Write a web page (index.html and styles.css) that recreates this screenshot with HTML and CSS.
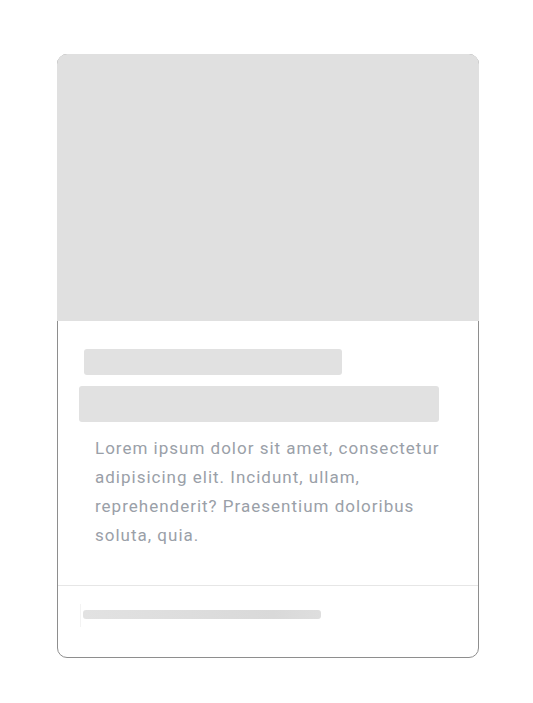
FILE: index.html
```html
<!DOCTYPE html>
<html>
<head>
<meta charset="utf-8">
<link rel="stylesheet" href="styles.css">
</head>
<body>
<div class="card">
  <div class="media"></div>
  <div class="content">
    <div class="bar bar-title"></div>
    <div class="bar bar-sub"></div>
    <p class="text">Lorem ipsum dolor sit amet, consectetur adipisicing elit. Incidunt, ullam, reprehenderit? Praesentium doloribus soluta, quia.</p>
  </div>
  <div class="footer">
    <div class="footer-item">
      <div class="footer-bar"></div>
    </div>
  </div>
</div>
</body>
</html>
```
FILE: styles.css
```css
html, body {
  margin: 0;
  padding: 0;
  background: #ffffff;
}
body {
  font-family: Roboto, "Liberation Sans", sans-serif;
}
.card {
  margin: 54px 0 0 57px;
  width: 420px;
  border: 1px solid #8e8e8e;
  border-radius: 10px;
  background: #ffffff;
}
.media {
  margin: -1px -1px 0 -1px;
  height: 267px;
  background: #e0e0e0;
  border-radius: 10px 10px 0 0;
}
.content {
  padding-top: 28px;
}
.bar {
  background: #e1e1e1;
  border-radius: 3px;
}
.bar-title {
  margin-left: 26px;
  width: 258px;
  height: 26px;
}
.bar-sub {
  margin-top: 11px;
  margin-left: 21px;
  width: 360px;
  height: 36px;
}
.text {
  margin: 12px 0 0 0;
  padding: 0 20px 0 37px;
  font-size: 17px;
  line-height: 29px;
  letter-spacing: 1px;
  color: #9aa0a8;
}
.footer {
  margin-top: 35px;
  border-top: 1px solid #e6e6e6;
  height: 72px;
  padding: 18px 0 0 22px;
  box-sizing: border-box;
}
.footer-item {
  display: inline-block;
  border-left: 1px solid #f3f3f3;
  padding: 6px 0 8px 2px;
}
.footer-bar {
  width: 238px;
  height: 9px;
  border-radius: 3px;
  background: linear-gradient(90deg, #e2e2e2, #d9d9d9 80%, #dedede);
}
```
